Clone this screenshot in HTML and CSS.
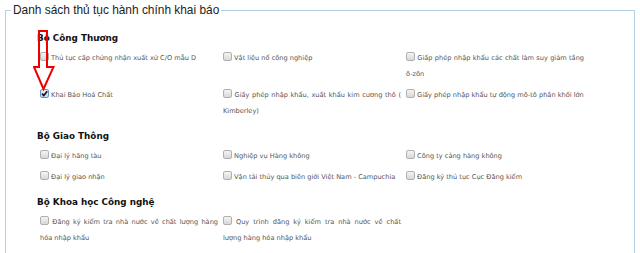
FILE: index.html
```html
<!DOCTYPE html>
<html lang="vi">
<head>
  <meta charset="UTF-8" />
  <title>Danh sách thủ tục hành chính khai báo</title>
  <link rel="stylesheet" href="styles.css">
</head>
<body>

  <fieldset class="proc-box">
    <legend>Danh sách thủ tục hành chính khai báo</legend>
    <div class="proc-body">

      <h3>Bộ Công Thương</h3>
      <div class="grid">
        <label class="item"><span class="cb"></span> Thủ tục cấp chứng nhận xuất xứ C/O mẫu D</label>
        <label class="item"><span class="cb"></span> Vật liệu nổ công nghiệp</label>
        <label class="item"><span class="cb"></span> Giấp phép nhập khẩu các chất làm suy giảm tầng ô-zôn</label>
        <label class="item"><span class="cb checked"><svg viewBox="0 0 9 9" width="9" height="9"><path d="M2 4.6 L3.8 6.6 L7.2 2.2" fill="none" stroke="#111" stroke-width="1.6"/></svg></span> Khai Báo Hoá Chất</label>
        <label class="item"><span class="cb"></span> Giấy phép nhập khẩu, xuất khẩu kim cương thô ( Kimberley)</label>
        <label class="item"><span class="cb"></span> Giấy phép nhập khẩu tự động mô-tô phân khối lớn</label>
      </div>

      <h3>Bộ Giao Thông</h3>
      <div class="grid">
        <label class="item"><span class="cb"></span> Đại lý hãng tàu</label>
        <label class="item"><span class="cb"></span> Nghiệp vụ Hàng không</label>
        <label class="item"><span class="cb"></span> Công ty cảng hàng không</label>
        <label class="item"><span class="cb"></span> Đại lý giao nhận</label>
        <label class="item"><span class="cb"></span> Vận tải thủy qua biên giới Việt Nam - Campuchia</label>
        <label class="item"><span class="cb"></span> Đăng ký thủ tục Cục Đăng kiểm</label>
      </div>

      <h3>Bộ Khoa học Công nghệ</h3>
      <div class="grid">
        <label class="item"><span class="cb"></span> Đăng ký kiểm tra nhà nước về chất lượng hàng hóa nhập khẩu</label>
        <label class="item"><span class="cb"></span> Quy trình đăng ký kiểm tra nhà nước về chất lượng hàng hóa nhập khẩu</label>
      </div>

    </div>

    <!-- red arrow pointing at the checked item -->
    <svg class="arrow" width="22" height="62" viewBox="0 0 22 62">
      <path d="M6 1 H14 V37 H20.5 L10.5 59 L1 37 H6 Z" fill="none" stroke="#e00" stroke-width="2"/>
    </svg>
  </fieldset>

</body>
</html>
```

FILE: styles.css
```css
body {
  margin: 0;
  background: #fff;
  font-family: "DejaVu Sans", Verdana, sans-serif;
  color: #555;
}
.proc-box {
  position: relative;
  margin: 1px 5px 0 5px;
  padding: 0 0 40px 0;
  border: 1px solid #b5cfe3;
  border-bottom: none;
  min-height: 260px;
}
.proc-box legend {
  margin-left: 5px;
  padding: 0 2px;
  font-family: "Liberation Sans", Arial, sans-serif;
  font-size: 11.9px;
  line-height: 18px;
  color: #222;
}
.proc-body {
  padding: 7px 0 0 31px;
}
.proc-body h3 {
  margin: 4px 0 4px;
  font-family: "DejaVu Sans", Verdana, sans-serif;
  font-size: 8.8px;
  line-height: 16px;
  color: #111;
}
.grid {
  display: grid;
  grid-template-columns: repeat(3, 178px);
  column-gap: 5px;
  padding-left: 3px;
}
.item {
  display: block;
  font-size: 6.6px;
  line-height: 16px;
  margin-bottom: 5px;
  text-align: justify;
}
.cb {
  display: inline-block;
  width: 7px;
  height: 7px;
  border: 1px solid #b0b0b0;
  border-radius: 2px;
  background: linear-gradient(#f4f4f4, #d8d8d8);
  vertical-align: -1px;
  position: relative;
}
.cb.checked {
  border-color: #6f93c4;
  background: linear-gradient(#e6effa, #c5d7ef);
}
.cb svg {
  position: absolute;
  left: -1px;
  top: -1px;
}
.arrow {
  position: absolute;
  left: 27px;
  top: 11px;
}
```
